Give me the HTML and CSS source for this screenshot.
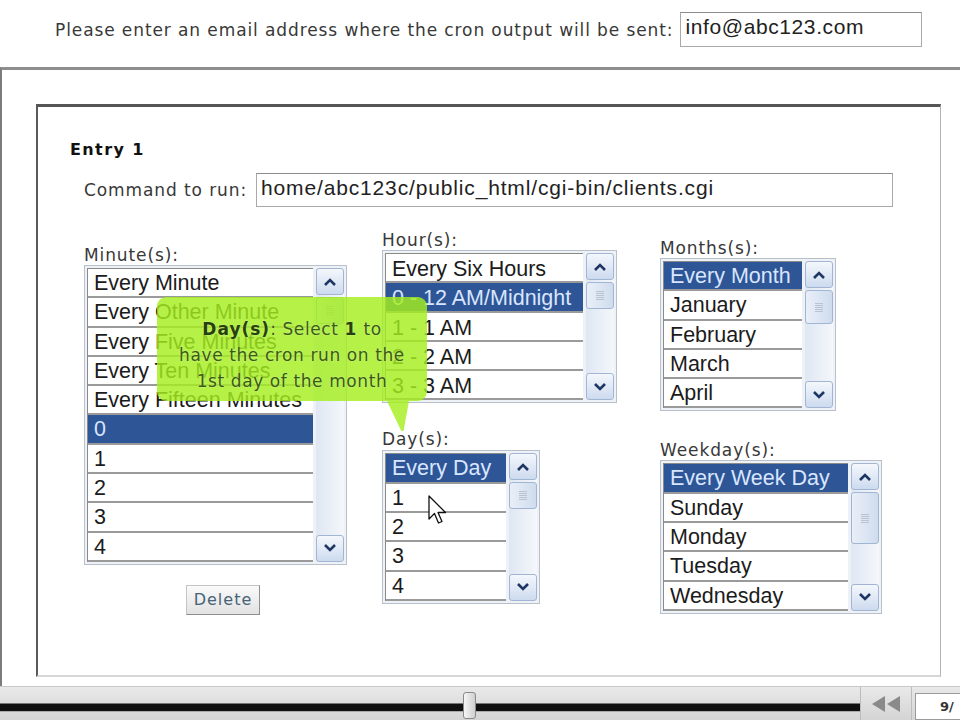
FILE: index.html
```html
<!DOCTYPE html>
<html lang="en">
<head>
    <meta charset="UTF-8">
    <title>Cron Jobs</title>
    <link rel="stylesheet" href="styles.css">
</head>
<body>
    <div class="page">
        <div class="email-row">
            <label class="label">Please enter an email address where the cron output will be sent:</label>
            <div class="text-input email-input">info@abc123.com</div>
        </div>

        <div class="frame">
            <div class="entry">
                <h3 class="entry-title">Entry 1</h3>
                <div class="command-row">
                    <label class="label">Command to run:</label>
                    <div class="text-input command-input">home/abc123c/public_html/cgi-bin/clients.cgi</div>
                </div>

                <div class="fields">
                    <!-- Minutes -->
                    <div class="col col-minute">
                        <div class="label field-label">Minute(s):</div>
                        <div class="listbox list-minute">
                            <div class="rows">
                                <div class="row">Every Minute</div>
                                <div class="row">Every Other Minute</div>
                                <div class="row">Every Five Minutes</div>
                                <div class="row">Every Ten Minutes</div>
                                <div class="row">Every Fifteen Minutes</div>
                                <div class="row selected">0</div>
                                <div class="row">1</div>
                                <div class="row">2</div>
                                <div class="row">3</div>
                                <div class="row">4</div>
                            </div>
                            <div class="scroll">
                                <div class="scroll-btn"><svg width="14" height="10" viewBox="0 0 14 10"><polyline points="2,8 7,3 12,8" /></svg></div>
                                <div class="thumb"><span></span></div>
                                <div class="scroll-space"></div>
                                <div class="scroll-btn"><svg width="14" height="10" viewBox="0 0 14 10"><polyline points="2,2 7,7 12,2" /></svg></div>
                            </div>
                        </div>
                        <button class="delete-btn">Delete</button>
                    </div>

                    <!-- Hours and days -->
                    <div class="col col-mid">
                        <div class="label field-label">Hour(s):</div>
                        <div class="listbox list-hour">
                            <div class="rows">
                                <div class="row">Every Six Hours</div>
                                <div class="row selected">0 - 12 AM/Midnight</div>
                                <div class="row">1 - 1 AM</div>
                                <div class="row">2 - 2 AM</div>
                                <div class="row">3 - 3 AM</div>
                            </div>
                            <div class="scroll">
                                <div class="scroll-btn"><svg width="14" height="10" viewBox="0 0 14 10"><polyline points="2,8 7,3 12,8" /></svg></div>
                                <div class="thumb"><span></span></div>
                                <div class="scroll-space"></div>
                                <div class="scroll-btn"><svg width="14" height="10" viewBox="0 0 14 10"><polyline points="2,2 7,7 12,2" /></svg></div>
                            </div>
                        </div>

                        <div class="label field-label day-label">Day(s):</div>
                        <div class="listbox list-day">
                            <div class="rows">
                                <div class="row selected">Every Day</div>
                                <div class="row">1</div>
                                <div class="row">2</div>
                                <div class="row">3</div>
                                <div class="row">4</div>
                            </div>
                            <div class="scroll">
                                <div class="scroll-btn"><svg width="14" height="10" viewBox="0 0 14 10"><polyline points="2,8 7,3 12,8" /></svg></div>
                                <div class="thumb"><span></span></div>
                                <div class="scroll-space"></div>
                                <div class="scroll-btn"><svg width="14" height="10" viewBox="0 0 14 10"><polyline points="2,2 7,7 12,2" /></svg></div>
                            </div>
                        </div>
                    </div>

                    <!-- Months and weekdays -->
                    <div class="col col-right">
                        <div class="label field-label">Months(s):</div>
                        <div class="listbox list-month">
                            <div class="rows">
                                <div class="row selected">Every Month</div>
                                <div class="row">January</div>
                                <div class="row">February</div>
                                <div class="row">March</div>
                                <div class="row">April</div>
                            </div>
                            <div class="scroll">
                                <div class="scroll-btn"><svg width="14" height="10" viewBox="0 0 14 10"><polyline points="2,8 7,3 12,8" /></svg></div>
                                <div class="thumb thumb-tall"><span></span></div>
                                <div class="scroll-space"></div>
                                <div class="scroll-btn"><svg width="14" height="10" viewBox="0 0 14 10"><polyline points="2,2 7,7 12,2" /></svg></div>
                            </div>
                        </div>

                        <div class="label field-label weekday-label">Weekday(s):</div>
                        <div class="listbox list-weekday">
                            <div class="rows">
                                <div class="row selected">Every Week Day</div>
                                <div class="row">Sunday</div>
                                <div class="row">Monday</div>
                                <div class="row">Tuesday</div>
                                <div class="row">Wednesday</div>
                            </div>
                            <div class="scroll">
                                <div class="scroll-btn"><svg width="14" height="10" viewBox="0 0 14 10"><polyline points="2,8 7,3 12,8" /></svg></div>
                                <div class="thumb thumb-long"><span></span></div>
                                <div class="scroll-space"></div>
                                <div class="scroll-btn"><svg width="14" height="10" viewBox="0 0 14 10"><polyline points="2,2 7,7 12,2" /></svg></div>
                            </div>
                        </div>
                    </div>
                </div>

                <!-- help bubble over the lists -->
                <div class="tooltip">
                    <b>Day(s)</b>: Select <b>1</b> to<br>
                    have the cron run on the<br>
                    1st day of the month
                </div>

                <svg class="cursor" width="20" height="32" viewBox="0 0 20 32">
                    <path d="M1 1 L1 24 L6.5 18.5 L10.5 28 L14 26.5 L10 17.5 L17.5 17.5 Z" />
                </svg>
            </div>
        </div>

        <div class="player">
            <div class="track">
                <div class="track-line"></div>
                <div class="track-thumb"></div>
            </div>
            <div class="rewind">
                <svg width="34" height="18" viewBox="0 0 34 18"><polygon points="16,1 16,17 3,9" /><polygon points="31,1 31,17 18,9" /></svg>
            </div>
            <div class="counter">9/</div>
        </div>
    </div>
</body>
</html>
```

FILE: styles.css
```css
/* cron job editor */
body {
    margin: 0;
    background-color: #fff;
    color: #333;
}

.page {
    width: 960px;
    height: 720px;
    overflow: hidden;
    display: flex;
    flex-direction: column;
}

.label {
    font-family: "DejaVu Sans", Verdana, sans-serif;
    font-size: 17px;
    letter-spacing: 0.9px;
    color: #383838;
}

.text-input {
    font-family: "Liberation Sans", Arial, sans-serif;
    font-size: 21px;
    color: #222;
    background-color: #fff;
    border: 1px solid #a9a9a9;
    border-top-color: #8d8d8d;
    box-sizing: border-box;
    padding: 2px 4px;
}

/* email line at the top */
.email-row {
    height: 67px;
    display: flex;
    align-items: flex-start;
    padding-left: 55px;
    box-sizing: border-box;
    padding-top: 12px;
}

.email-row .label {
    margin-top: 8px;
    margin-right: 7px;
    white-space: nowrap;
}

.email-input {
    width: 242px;
    height: 35px;
    letter-spacing: 0.6px;
}

/* outer frame and entry box */
.frame {
    height: 619px;
    border-top: 3px solid #8e8e8e;
    border-left: 2px solid #7c7c7c;
    padding: 34px 0 0 34px;
    box-sizing: border-box;
}

.entry {
    position: relative;
    width: 905px;
    height: 573px;
    box-sizing: border-box;
    border-top: 3px solid #555;
    border-left: 2px solid #5a5a5a;
    border-right: 1px solid #b4b4b4;
    border-bottom: 2px solid #d6d6d6;
    padding: 34px 0 0 32px;
}

.entry-title {
    margin: 0;
    font-family: "DejaVu Sans", Verdana, sans-serif;
    font-size: 16px;
    letter-spacing: 1.4px;
    line-height: 18px;
    color: #111;
}

.command-row {
    display: flex;
    align-items: center;
    margin: 14px 0 0 14px;
}

.command-row .label {
    margin-right: 9px;
    white-space: nowrap;
}

.command-input {
    width: 637px;
    height: 34px;
    letter-spacing: 0.85px;
}

/* the list columns */
.fields {
    display: grid;
    grid-template-columns: 298px 278px auto;
    margin: 24px 0 0 14px;
}

.col {
    display: flex;
    flex-direction: column;
    align-items: flex-start;
}

.col-minute {
    margin-top: 15px;
}

.col-right {
    margin-top: 8px;
}

.field-label {
    line-height: 18px;
    margin-bottom: 1px;
}

.day-label {
    margin-top: 27px;
    margin-bottom: 2px;
}

.weekday-label {
    margin-top: 30px;
}

.listbox {
    display: flex;
    border: 1px solid #b8c0cb;
    background-color: #eef1f6;
    padding: 2px;
    box-sizing: border-box;
}

.list-minute { width: 263px; }
.list-hour { width: 235px; }
.list-day { width: 158px; }
.list-month { width: 176px; }
.list-weekday { width: 222px; }

.rows {
    flex: 1;
    background-color: #fff;
    border-left: 1px solid #8a8a8a;
    border-top: 1px solid #8a8a8a;
}

.row {
    height: 29.3px;
    box-sizing: border-box;
    border-bottom: 2px solid #9a9a9a;
    padding-left: 6px;
    font-family: "Liberation Sans", Arial, sans-serif;
    font-size: 21.5px;
    line-height: 28px;
    color: #1b1b1b;
    white-space: nowrap;
    overflow: hidden;
}

.list-hour .row {
    line-height: 30px;
}

.row.selected {
    background-color: #2e5596;
    color: #d8e6ff;
}

.scroll {
    width: 28px;
    margin-left: 3px;
    display: flex;
    flex-direction: column;
    background: linear-gradient(to right, #dfe7f3, #f4f7fb);
    border-radius: 3px;
}

.scroll-btn,
.thumb {
    height: 27px;
    box-sizing: border-box;
    border: 1px solid #a2b6d3;
    border-radius: 3px;
    background: linear-gradient(#f4f7fc, #cddbef);
    display: flex;
    align-items: center;
    justify-content: center;
}

.scroll-btn polyline {
    fill: none;
    stroke: #1d3663;
    stroke-width: 2.6;
}

.thumb {
    margin-top: 2px;
    background: linear-gradient(to right, #e9eff8, #cfdcee);
}

.thumb span {
    width: 8px;
    height: 9px;
    background: repeating-linear-gradient(#b9c3cf 0 1px, transparent 1px 2px);
}

.thumb-tall { height: 34px; }
.thumb-long { height: 52px; }

.scroll-space {
    flex: 1;
}

.delete-btn {
    margin: 20px 0 0 102px;
    width: 74px;
    height: 30px;
    font-family: "DejaVu Sans", Verdana, sans-serif;
    font-size: 16px;
    letter-spacing: 1px;
    color: #456478;
    background: linear-gradient(#fafafa, #e2e2e2);
    border: 1px solid #c4c4c4;
    border-right-color: #8e8e8e;
    border-bottom-color: #8e8e8e;
    padding: 0;
}

/* help bubble */
.tooltip {
    position: absolute;
    left: 119px;
    top: 190px;
    width: 270px;
    height: 104px;
    box-sizing: border-box;
    padding-top: 19px;
    border-radius: 9px;
    background-color: rgba(165, 238, 30, 0.82);
    font-family: "DejaVu Sans", Verdana, sans-serif;
    font-size: 17px;
    letter-spacing: 0.6px;
    line-height: 26px;
    text-align: center;
    color: #3d5a14;
    text-shadow: 0 0 2px rgba(230, 255, 200, 0.6);
}

.tooltip b {
    color: #2a400c;
    letter-spacing: 1px;
}

.tooltip::after {
    content: "";
    position: absolute;
    left: 230px;
    top: 104px;
    width: 22px;
    height: 30px;
    background-color: rgba(165, 238, 30, 0.82);
    clip-path: polygon(0 0, 100% 0, 75% 100%, 65% 100%);
}

.cursor {
    position: absolute;
    left: 390px;
    top: 388px;
}

.cursor path {
    fill: #fff;
    stroke: #111;
    stroke-width: 1.3;
    stroke-linejoin: round;
}

/* video player bar along the bottom */
.player {
    flex: 1;
    display: flex;
    background: linear-gradient(#e9e9e9, #d4d4d4);
    border-top: 1px solid #c8c8c8;
}

.track {
    position: relative;
    flex: 1;
}

.track-line {
    margin-top: 16px;
    height: 7px;
    background-color: #111;
    border-top: 1px solid #777;
    border-bottom: 1px solid #aaa;
}

.track-thumb {
    position: absolute;
    left: 463px;
    top: 5px;
    width: 13px;
    height: 27px;
    box-sizing: border-box;
    border: 1px solid #8a8a8a;
    border-radius: 3px;
    background: linear-gradient(to right, #f6f6f6, #cfcfcf);
}

.rewind {
    width: 50px;
    display: flex;
    align-items: center;
    justify-content: center;
    border-left: 1px solid #bcbcbc;
    border-right: 1px solid #bcbcbc;
}

.rewind polygon {
    fill: #8a8a8a;
}

.counter {
    width: 45px;
    margin: 6px 0 0 3px;
    background-color: #fff;
    border: 1px solid #9a9a9a;
    border-right: none;
    font-family: "DejaVu Sans", Verdana, sans-serif;
    font-size: 13px;
    font-weight: bold;
    color: #333;
    padding: 5px 0 0 24px;
    box-sizing: border-box;
}
```
